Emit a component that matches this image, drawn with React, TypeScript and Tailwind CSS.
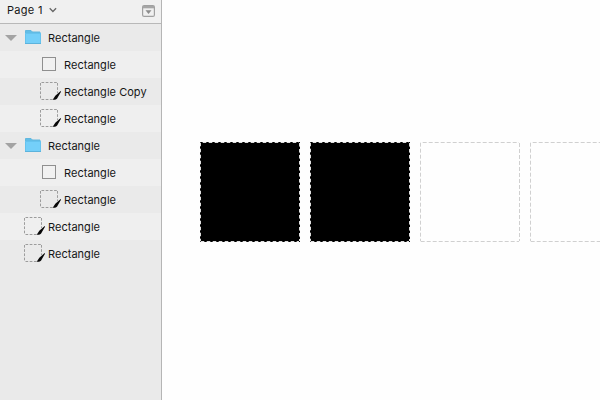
type LayerKind = 'folder' | 'mask' | 'slice';

interface Layer {
  name: string;
  kind: LayerKind;
  nested?: boolean;
}

const layers: Layer[] = [
  { name: 'Rectangle', kind: 'folder' },
  { name: 'Rectangle', kind: 'mask', nested: true },
  { name: 'Rectangle Copy', kind: 'slice', nested: true },
  { name: 'Rectangle', kind: 'slice', nested: true },
  { name: 'Rectangle', kind: 'folder' },
  { name: 'Rectangle', kind: 'mask', nested: true },
  { name: 'Rectangle', kind: 'slice', nested: true },
  { name: 'Rectangle', kind: 'slice' },
  { name: 'Rectangle', kind: 'slice' },
];

function FolderIcon() {
  return (
    <svg width="24" height="27" viewBox="0 0 24 27">
      <path d="M1.5 6.5h5.5l1.500 1.500h7.500v11.500h-14.500z" fill="#62bde6" stroke="#62b8df" />
      <path d="M1 9h16v11H1z" fill="#74cff9" />
      <path d="M1.5 9.500h15v10h-15z" fill="none" stroke="#66c3ee" />
      <path d="M1 19.500h16" stroke="#5cb3dc" />
    </svg>
  );
}

function MaskIcon() {
  return (
    <svg width="24" height="27" viewBox="0 0 24 27">
      <rect x="2.5" y="6.5" width="13" height="13" fill="#f1f1f1" stroke="#8f8f8f" />
    </svg>
  );
}

function SliceIcon() {
  return (
    <svg width="24" height="27" viewBox="0 0 24 27">
      <path
        d="M1.5 4.5H17M17.5 5V15M.5 5v16.5M1.5 21.5H13"
        fill="none"
        stroke="#9c9c9c"
        strokeDasharray="2.700 1.500"
      />
      <path d="M20.700 13l-5.400 4.700-2.600 4.100c2.600.2 4.400-.5 5-2.300l3.300-5.800z" fill="#080808" />
    </svg>
  );
}

function LayerRow({ layer, index }: { layer: Layer; index: number }) {
  return (
    <div
      className={`flex h-[27px] items-center ${index % 2 ? 'bg-[#efefef]' : 'bg-[#eaeaea]'} ${
        layer.nested ? 'pl-10' : layer.kind === 'folder' ? 'pl-[5px]' : 'pl-6'
      }`}
    >
      {layer.kind === 'folder' && (
        <svg className="mr-[7px]" width="12" height="27" viewBox="0 0 12 27">
          <path d="M0 11h12l-6 6z" fill="#a3a3a3" />
        </svg>
      )}
      {layer.kind === 'folder' && <FolderIcon />}
      {layer.kind === 'mask' && <MaskIcon />}
      {layer.kind === 'slice' && <SliceIcon />}
      <span className="pt-[2px] leading-[25px] tracking-[0.03px] whitespace-nowrap">{layer.name}</span>
    </div>
  );
}

function Artboard({ filled = false }: { filled?: boolean }) {
  return (
    <svg className="shrink-0" width="100" height="100" viewBox="0 0 100 100">
      {filled && <rect width="100" height="100" fill="#000" />}
      <path
        d="M2.700 .5H99M99.500 1V99M.5 .7V99M.7 99.500H99"
        fill="none"
        stroke={filled ? '#dedede' : '#d0d0d0'}
        strokeDasharray={filled ? '3.600 2.400' : '4 2'}
      />
    </svg>
  );
}

export default function App() {
  return (
    <div className="flex h-[400px] w-[600px] overflow-hidden bg-[#fefefe] font-['Inter',sans-serif] text-[11px] text-[#161616]">
      <aside className="w-[162px] shrink-0 border-r border-[#b5b5b5] bg-[#eaeaea]">
        <header className="flex h-6 items-center border-b border-[#b8b8b8] bg-[#f0f0f0] pr-[6px] pl-[7px]">
          <span className="pb-[4px] leading-[18px] tracking-[0.3px]">Page 1</span>
          <svg className="ml-[6px]" width="8" height="24" viewBox="0 0 8 24">
            <path d="M.7 8.300l3.200 3.200 3.200-3.200" fill="none" stroke="#666" strokeWidth="1.3" />
          </svg>
          <svg className="ml-auto" width="13" height="24" viewBox="0 0 13 24">
            <rect x=".6" y="5.600" width="11.800" height="10.800" rx="1.5" fill="#f0f0f0" stroke="#a0a0a0" strokeWidth="1.200" />
            <path d="M1 6h11v2.300H1z" fill="#a6a6a6" />
            <path d="M3.500 10.300h6l-3 3.700z" fill="#8c8c8c" />
          </svg>
        </header>
        {layers.map((layer, index) => (
          <LayerRow key={index} layer={layer} index={index} />
        ))}
      </aside>
      <main className="flex min-w-0 flex-1 gap-[10px] overflow-hidden pt-[142px] pl-[38px]">
        <Artboard filled />
        <Artboard filled />
        <Artboard />
        <Artboard />
      </main>
    </div>
  );
}
